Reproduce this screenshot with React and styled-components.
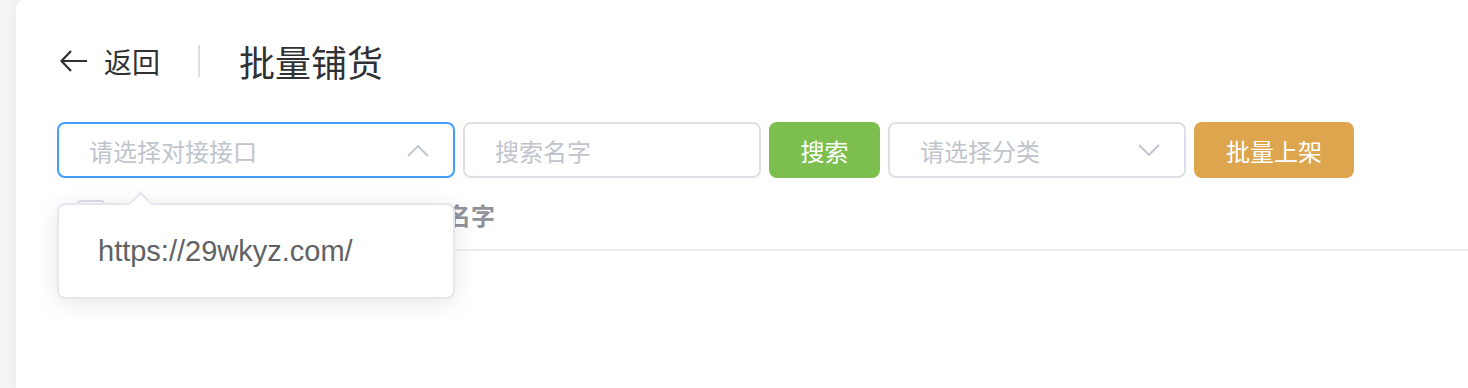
import React from "react";
import styled, { createGlobalStyle } from "styled-components";

const GlobalStyle = createGlobalStyle`
  html, body {
    margin: 0;
    padding: 0;
    background: #f4f5f7;
    font-family: "Liberation Sans", "Noto Sans CJK SC", sans-serif;
    overflow: hidden;
  }
  * { box-sizing: border-box; }
`;

const Page = styled.div`
  padding-left: 16px;
  height: 388px;
`;

const Card = styled.div`
  background: #fff;
  height: 100%;
  border-top-left-radius: 8px;
  box-shadow: 0 2px 14px rgba(0, 0, 0, 0.06);
  padding: 41px 0 0 41px;
`;

const Header = styled.div`
  display: flex;
  align-items: center;
  height: 40px;
  margin-bottom: 41px;
  color: #303133;
`;

const Back = styled.div`
  display: flex;
  align-items: center;
  padding-left: 3px;
  cursor: pointer;
`;

const BackText = styled.span`
  font-size: 28px;
  margin-left: 16px;
`;

const Divider = styled.span`
  width: 2px;
  height: 32px;
  background: #dcdfe6;
  margin: 0 39px 0 38px;
`;

const Title = styled.span`
  font-size: 36px;
`;

const Toolbar = styled.div`
  display: flex;
  gap: 8px;
  height: 56px;
  margin-bottom: 1px;
`;

const Field = styled.div`
  position: relative;
  width: ${(p) => p.$width}px;
  height: 56px;
  display: flex;
  align-items: center;
  justify-content: space-between;
  padding: 0 24px 0 30px;
  border: 2px solid ${(p) => (p.$focused ? "#409eff" : "#dcdfe6")};
  border-radius: 8px;
  background: #fff;
`;

const Placeholder = styled.span`
  font-size: 24px;
  color: #c0c4cc;
`;

const Button = styled.button`
  width: ${(p) => p.$width}px;
  height: 56px;
  border: none;
  border-radius: 8px;
  background: ${(p) => p.$color};
  color: #fff;
  font-family: inherit;
  font-size: 24px;
  padding: 0;
`;

const Dropdown = styled.div`
  position: absolute;
  top: 79px;
  left: -2px;
  width: 398px;
  padding: 12px 0;
  background: #fff;
  border: 2px solid #e4e7ed;
  border-radius: 8px;
  box-shadow: 0 4px 24px rgba(0, 0, 0, 0.1);
  z-index: 5;
`;

const DropArrow = styled.span`
  position: absolute;
  top: -10px;
  left: 73px;
  width: 17px;
  height: 17px;
  background: #fff;
  border-left: 2px solid #e4e7ed;
  border-top: 2px solid #e4e7ed;
  transform: rotate(45deg);
`;

const Option = styled.div`
  height: 68px;
  line-height: 68px;
  padding: 0 39px;
  font-size: 29px;
  color: #606266;
`;

const Table = styled.div`
  display: grid;
  grid-template-columns: 110px 260px 1fr;
  height: 72px;
  border-bottom: 2px solid #ebeef5;
  align-items: center;
`;

const HeadCell = styled.div`
  padding-left: 20px;
  font-size: 24px;
  font-weight: bold;
  color: #909399;
`;

const Checkbox = styled.span`
  display: block;
  width: 28px;
  height: 28px;
  border: 2px solid #dcdfe6;
  border-radius: 4px;
  background: #fff;
`;

const Chevron = ({ up }) => (
  <svg width="22" height="13" viewBox="0 0 22 13" fill="none">
    <path
      d={up ? "M1 12 L11 2 L21 12" : "M1 1 L11 11 L21 1"}
      stroke="#c0c4cc"
      strokeWidth="1.8"
    />
  </svg>
);

const BackArrow = () => (
  <svg width="28" height="22" viewBox="0 0 28 22" fill="none">
    <path d="M11 1 L1.5 11 L11 21 M1.5 11 H27" stroke="#303133" strokeWidth="2.2" />
  </svg>
);

export default function App() {
  return (
    <>
      <GlobalStyle />
      <Page>
        <Card>
          <Header>
            <Back>
              <BackArrow />
              <BackText>返回</BackText>
            </Back>
            <Divider />
            <Title>批量铺货</Title>
          </Header>
          <Toolbar>
            <Field $width={398} $focused>
              <Placeholder>请选择对接接口</Placeholder>
              <Chevron up />
              <Dropdown>
                <DropArrow />
                <Option>https://29wkyz.com/</Option>
              </Dropdown>
            </Field>
            <Field $width={298}>
              <Placeholder>搜索名字</Placeholder>
            </Field>
            <Button $width={111} $color="#7dbf4e">搜索</Button>
            <Field $width={298}>
              <Placeholder>请选择分类</Placeholder>
              <Chevron />
            </Field>
            <Button $width={160} $color="#dca54e">批量上架</Button>
          </Toolbar>
          <Table>
            <HeadCell>
              <Checkbox />
            </HeadCell>
            <HeadCell />
            <HeadCell>名字</HeadCell>
          </Table>
        </Card>
      </Page>
    </>
  );
}
